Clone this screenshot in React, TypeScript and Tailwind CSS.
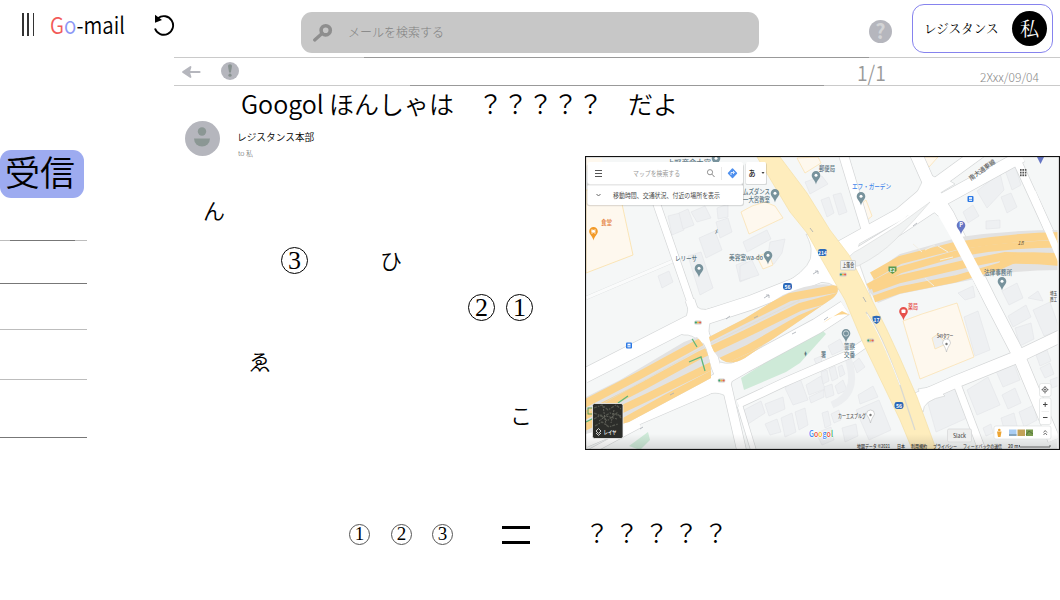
import React from "react";

const JP = "font-['Noto_Sans_CJK_JP',sans-serif]";

type P = { d: string; w: number };

const ROADS: P[] = [
  { d: "M645 170L690 300L697 322", w: 7 },
  { d: "M584 376L688 323L750 303L828 272", w: 14 },
  { d: "M690 300C694 314 704 334 711 348C715 364 716 372 727 387L742 452", w: 9 },
  { d: "M584 440L705 388L745 365L817 326L845 308", w: 15 },
  { d: "M584 455L640 425", w: 5 },
  { d: "M738 404L785 382L850 354L870 340", w: 8 },
  { d: "M845 262L900 228L942 200L1022 156", w: 12 },
  { d: "M835 250L900 214L932 187L980 152", w: 12 },
  { d: "M912 145L932 190L948 215L990 300L1018 354L1054 440", w: 12 },
  { d: "M842 150L868 236", w: 9 },
  { d: "M1012 150L1066 268", w: 8 },
  { d: "M910 402L955 382L1017 357L1065 334", w: 12 },
  { d: "M957 384L982 450", w: 7 },
  { d: "M740 406L754 452", w: 5 },
];

const BUILDINGS: string[] = [
  "668,216 680,213 684,230 672,235", "679,213 688,209 694,225 683,229", "691,212 705,206 711,218 697,222",
  "699,238 715,231 722,250 706,258", "716,222 728,218 732,232 720,238", "688,256 701,252 713,288 700,295",
  "658,276 669,271 673,282 662,288", "736,265 746,261 750,278 740,282", "717,208 728,204 728,217 718,219",
  "743,242 767,230 771,239 747,252", "770,242 785,239 782,253 774,264 767,261", "740,266 752,260 759,275 740,281",
  "805,182 822,176 828,184 810,194", "821,200 829,197 834,213 827,217", "833,195 841,193 847,212 839,215",
  "977,191 1000,173 1004,190 987,208", "1005,170 1015,166 1021,185 1012,190", "1001,197 1011,193 1017,207 1007,213",
  "963,212 973,205 979,216 968,223", "986,221 1000,220 1000,228 986,229", "958,293 973,286 975,297 965,300",
  "1002,291 1017,283 1023,298 1009,305", "1028,298 1038,291 1043,301",
  "828,346 840,339 845,349 832,355", "814,359 821,356 822,363 816,364", "853,363 859,358 865,367 857,373",
  "785,388 800,378 808,400 793,405", "806,385 821,376 825,389 809,395", "821,372 827,370 829,381 823,384",
  "829,369 835,366 838,378 832,381", "838,367 842,365 845,374 840,377", "824,387 832,384 834,395 826,398",
  "835,386 843,380 847,390 838,394", "809,397 824,390 824,397 811,403", "744,410 761,401 765,413 748,424",
  "765,404 783,397 785,409 769,416", "765,424 777,419 781,432 770,435", "781,418 792,413 796,432 785,437",
  "795,412 805,408 808,425 799,430", "822,413 828,411 831,425 825,428", "831,414 839,410 841,420 834,423",
  "842,428 856,424 858,436 845,442", "858,395 873,386 878,397 860,404", "856,410 879,400 891,430 869,440",
  "816,433 831,427 834,440 822,445", "964,317 978,311 990,350 975,356", "1008,316 1026,305 1031,317 1013,327",
  "1015,328 1031,323 1034,339 1020,346", "1033,310 1050,302 1060,330 1044,336", "1036,355 1047,350 1051,361 1040,366",
  "1040,368 1050,363 1054,374 1045,378", "927,400 955,388 967,418 936,432", "967,390 988,377 1000,405 977,415",
  "996,371 1014,364 1020,380 1003,387", "1002,395 1015,388 1021,403 1008,409", "1001,418 1014,413 1018,430 1005,433",
  "1019,412 1034,405 1037,420 1024,427", "983,428 991,424 993,433 986,436", "1050,380 1058,377 1060,385 1052,388",
];

const STRIPS: string[] = [
  "M580 406L640 375L697 344L744 320L790 297L840 288",
  "M580 418L645 385L700 355L745 334L800 307L840 296",
  "M580 429L650 396L705 369L748 349L800 319L840 302",
  "M622 423L665 399L715 373L748 358L800 331L842 312",
];

function Strips() {
  return (
    <g>
      {STRIPS.map((d) => (
        <path key={d} d={d} fill="none" stroke="#fbd38b" strokeWidth="8" />
      ))}
      <path d="M586 413L700 349L800 300" fill="none" stroke="#e2dccb" strokeWidth=".7" />
    </g>
  );
}

function Pin({ x, y, c = "#77929c", s = 1 }: { x: number; y: number; c?: string; s?: number }) {
  return (
    <g transform={`translate(${x} ${y}) scale(${s})`}>
      <path d="M0 7.5C-.8 3-4.3 1.8-4.3-1.8A4.3 4.3 0 0 1 4.3-1.8C4.3 1.8.8 3 0 7.5Z" fill={c} />
      <circle cx="0" cy="-1.8" r="1.5" fill="#fff" />
    </g>
  );
}

type LabelProps = { x: number; y: number; w: number; s?: number; c?: string; b?: number; children: string };

function Label({ x, y, w, s = 6.5, c = "#5b7480", b = 500, children }: LabelProps) {
  return (
    <text x={x} y={y} fontSize={s} fill={c} fontWeight={b} textLength={w} lengthAdjust="spacingAndGlyphs">
      {children}
    </text>
  );
}

function Shield({ x, y, t }: { x: number; y: number; t: string }) {
  return (
    <g>
      <rect x={x - 4.5} y={y - 3.5} width="9" height="7" rx="2.4" fill="#2c68b8" />
      <text x={x} y={y + 2} fontSize="5" fill="#fff" fontWeight="700" textAnchor="middle">{t}</text>
    </g>
  );
}

function Signal({ x, y }: { x: number; y: number }) {
  return (
    <g>
      <rect x={x - 3.8} y={y - 2} width="7.6" height="4" rx="1.6" fill="#cfd0cd" />
      <circle cx={x - 2.1} cy={y} r="1.1" fill="#35a56a" />
      <circle cx={x} cy={y} r="1.1" fill="#f4b545" />
      <circle cx={x + 2.1} cy={y} r="1.1" fill="#e65b50" />
    </g>
  );
}

function MapView() {
  return (
    <svg viewBox="585 156 475 294" className={`block h-[294px] w-[475px] shrink-0 ${JP}`}>
      <defs>
        <clipPath id="hwLeft"><path d="M586 397L620 380L684 342L697 337Q712 352 711 378L700 384L629 422L586 434Z" /></clipPath>
        <clipPath id="hwMid"><path d="M709 337L744 319L783 295Q815 280 837 286Q840 292 833 298L745 358Q731 366 722 360Q712 354 709 337Z" /></clipPath>
        <linearGradient id="fade" x1="0" y1="0" x2="0" y2="1">
          <stop offset="0" stopColor="#000" stopOpacity="0" />
          <stop offset="1" stopColor="#000" stopOpacity=".13" />
        </linearGradient>
      </defs>
      <rect x="585" y="156" width="475" height="294" fill="#f5f7f7" />
      <path d="M586 190L619 190L633 255L586 273Z" fill="#fef8ee" stroke="#fbdc9c" strokeWidth=".7" />
      <path d="M586 158H602V165L586 172Z" fill="#fef8ee" />
      <path d="M586 298L673 261" stroke="#dcdfe0" strokeWidth="4" />
      <path d="M586 298L673 261" stroke="#fafbfb" strokeWidth="3" />
      <g fill="#eef0f2" stroke="#e2e4e7" strokeWidth=".6">
        {BUILDINGS.map((p) => <polygon key={p} points={p} />)}
      </g>
      <g fill="#fef8ee" stroke="#fbdfab" strokeWidth=".7">
        <path d="M741 212L752 206L765 202L775 206L783 218L749 234Z" />
        <path d="M797 158L818 157L821 163L805 173Z" />
        <path d="M861 204L866 200L872 216L866 221Z" />
        <path d="M757 257L768 252L773 265L763 269Z" />
        <path d="M921 157L938 157L929 167Z" />
        <path d="M903 321L922 314L957 303L974 357L920 379Z" />
        <path d="M932 338L938 334L946 344L935 349Z" fill="#eef0f2" />
      </g>
      <path d="M741 378L820 328L826 334L800 363L786 372L744 390Z" fill="#ceead8" />
      <path d="M629 446L648 432L650 440L640 450Z" fill="#ceead8" />
      <path d="M847 355C854 375 856 395 832 405" fill="none" stroke="#eceef0" strokeWidth="7" />

      <g fill="none" stroke="#d3d5d6">
        {ROADS.map((r) => <path key={r.d} d={r.d} strokeWidth={r.w + 1.3} />)}
      </g>
      <g fill="#fff" stroke="#d3d5d6" strokeWidth=".7">
        <path d="M668 331L679 325Q688 320 688 305L692 302Q700 313 712 308L728 312L712 318Q706 328 712 348L700 342Q692 334 684 335Z" />
        <path d="M705 386Q717 375 720 362Q731 366 744 358L765 355Q737 370 733 378Q728 391 733 408Q727 388 705 395Z" />
        <path d="M790 280Q813 265 811 252Q812 246 806 234L818 240L832 238Q836 244 852 240L862 236L856 254L872 300L848 305Q840 282 820 282Z" />
        <path d="M914 398Q922 395 918 389L935 386L945 396Q923 400 923 412Z" />
        <path d="M922 182Q926 178 920 170L928 172Q935 180 942 176L955 184L937 195Q948 198 949 213L938 216Q932 208 922 214L905 216Z" />
      </g>
      <g fill="none" stroke="#fff">
        {ROADS.map((r) => <path key={r.d} d={r.d} strokeWidth={r.w} />)}
      </g>
      <path d="M846 267Q846 255 860 249L900 224L930 202Q915 220 895 240Q880 255 858 266Z" fill="#f1f3f3" stroke="#d6d8d9" strokeWidth=".6" />

      <g clipPath="url(#hwLeft)">
        <rect x="585" y="320" width="135" height="130" fill="#e2e2e2" />
        <Strips />
        <g stroke="#5fb77b" strokeWidth="1.3" fill="none">
          <path d="M691 337L697 347M689 362L701 357L705 371M618 403L628 396M586 422L600 415" />
        </g>
      </g>
      <g clipPath="url(#hwMid)">
        <rect x="705" y="280" width="140" height="90" fill="#e2e2e2" />
        <Strips />
      </g>
      <path d="M823 323L842 311L850 315Q836 312 823 323Z" fill="#fbd38b" />
      <path d="M869 291Q872 272 900 254L960 237Q1010 230 1060 230V270Q1010 270 975 279L900 294L878 303Z" fill="#e2e2e2" />
      <g fill="none" stroke="#fbd38b">
        <path d="M872 276L900 260L955 246Q1010 237 1060 236" strokeWidth="8" />
        <path d="M868 287L900 270L960 253Q1010 244 1060 244" strokeWidth="7" />
        <path d="M872 289L900 279L965 264L1005 256L1060 257" strokeWidth="8" />
        <path d="M1000 257Q1025 251 1060 255V265Q1030 262 1000 263" strokeWidth="2" fill="#fbd38b" />
        <path d="M874 299L900 290L955 279L1000 266L1020 257" strokeWidth="7" />
      </g>
      <path d="M913 244L922 252M938 246L948 252M925 250L935 245M940 260L953 257M925 278L934 286" stroke="#f3efe4" strokeWidth="1" fill="none" />
      <path d="M942 211L954 232L994 308" stroke="#fff" strokeWidth="11" fill="none" />
      <path d="M1032 192L1062 262" stroke="#fff" strokeWidth="7" fill="none" />

      <path d="M757 157H780L807 193L830 230L849 255L872 300L887 330L900 358L917 397L936 449H912L900 420L863 343L845 300L822 260L807 233L790 212Z" fill="#feedbd" stroke="#f5dfa5" strokeWidth=".7" />
      <path d="M866 312Q880 330 900 385L915 430" stroke="#dad9d1" strokeWidth="1.3" fill="none" />
      <path d="M867 314Q881 335 900 385" stroke="#fff" strokeWidth=".8" fill="none" />

      <g stroke="#a6abb2" strokeWidth=".8" fill="none">
        <path d="M764 298L769 295M766 295H769V298M813 274L818 271M815 271H818V274M726 319L730 316M670 395L674 393M640 429L643 427M792 334L796 332M824 320L828 317M913 226L917 223M810 228L813 232M863 297L866 302M754 318L758 316" />
      </g>

      <Label x={667} y={165} w={44}>上野商会大宮</Label>
      <Pin x={716} y={160} />
      <Label x={819} y={171} w={16}>郵便局</Label><Pin x={816} y={177} />
      <Label x={852} y={189} w={39} c="#4285ea">エフ・ガーデン</Label><Pin x={861} y={198} />
      <Label x={743} y={194} w={27}>ムズダンス</Label>
      <Label x={743} y={202} w={27}>一大宮教室</Label><Pin x={775} y={195} />
      <Label x={675} y={261} w={22}>レリーサ</Label><Pin x={699} y={270} />
      <Label x={729} y={260} w={34}>美容室wa-do</Label><Pin x={768} y={257} />
      <Label x={601} y={225} w={11} c="#e47b35">食堂</Label><Pin x={593.5} y={233} c="#f29a28" />
      <path d="M592 229V234M595 229V234M591 231H593" stroke="#fff" strokeWidth=".7" />
      <g transform="translate(961 227)">
        <path d="M0 7.5C-.8 3-4.3 1.8-4.3-1.8A4.3 4.3 0 0 1 4.3-1.8C4.3 1.8.8 3 0 7.5Z" fill="#6676c4" />
        <text x="0" y=".3" fontSize="5.5" fill="#fff" fontWeight="700" textAnchor="middle">P</text>
      </g>
      <path d="M1037 157H1044L1040.500 164Z" fill="#6676c4" />
      <Label x={984} y={275} w={28}>法律事務所</Label><Pin x={1002} y={283} />
      <Label x={908} y={309} w={10} c="#e6504b">薬局</Label><Pin x={903.500} y={313} c="#e6504b" />
      <rect x="901.500" y="309.500" width="4" height="3.600" rx=".8" fill="#fff" />
      <Label x={937} y={338} w={16} s={5.5} c="#555">S49タワー</Label>
      <g transform="translate(946.500 344)"><path d="M0 8C-1 3-4-0-4-1A4 4 0 0 1 4-1C4 0 1 3 0 8Z" fill="#fff" stroke="#b5b7b9" strokeWidth=".6" /><circle r="1.200" fill="#777" /></g>
      <Pin x={846} y={335} s={1} /><circle cx="846" cy="333.500" r="2.600" fill="#77929c" stroke="#dce4e7" strokeWidth=".8" />
      <Label x={844} y={349} w={11}>警察</Label><Label x={844} y={357} w={11}>交番</Label>
      <Label x={821} y={357} w={5}>署</Label>
      <Label x={804} y={356} w={3} s={6}>♦</Label>
      <Label x={715} y={233} w={3} s={6}>ﾒ</Label>
      <Label x={838} y={418} w={28} s={5.5} c="#555">カーエスブルグ</Label>
      <g transform="translate(870.500 415)"><path d="M0 8C-1 3-4 0-4-1A4 4 0 0 1 4-1C4 0 1 3 0 8Z" fill="#fff" stroke="#b5b7b9" strokeWidth=".6" /><circle r="1.200" fill="#777" /></g>
      <Label x={1050} y={295} w={7} s={5} c="#555">埼玉</Label><Label x={1050} y={301} w={7} s={5} c="#555">商工</Label>
      <g transform="rotate(-36 971 181)"><Label x={971} y={181} w={31} s={6.500} c="#666">南大通東線</Label></g>
      <text x="1017.500" y="245" fontSize="5.500" fill="#655536" fontStyle="italic">18</text>

      <Shield x={822.5} y={252.500} t="214" />
      <Shield x={787.500} y={286.500} t="56" />
      <Shield x={899} y={405.500} t="56" />
      <path d="M872.500 316.500Q876.500 315 880.500 316.500Q881 322 876.500 324Q872 322 872.500 316.500Z" fill="#2c68b8" />
      <text x="876.500" y="321.500" fontSize="5" fill="#fff" fontWeight="700" textAnchor="middle">17</text>
      <path d="M888.500 266.500H896.500V271L892.500 274L888.500 271Z" fill="#5a9a52" />
      <text x="892.500" y="271.500" fontSize="4.500" fill="#fff" fontWeight="700" textAnchor="middle">E2</text>
      <rect x="588" y="408" width="6" height="6" fill="none" stroke="#5a9a52" />
      {[[629, 345.500], [970.500, 199]].map(([x, y]) => (
        <g key={x}><rect x={x - 3} y={y - 3} width="6" height="6" rx="1" fill="#2b78e4" /><rect x={x - 1.500} y={y - 1.800} width="3" height="3.600" fill="#fff" /><path d={`M${x - 1.500} ${y + .3}h3`} stroke="#2b78e4" strokeWidth=".8" /></g>
      ))}
      <Signal x={698} y={322.500} /><Signal x={721.500} y={380.500} /><Signal x={843} y={274.500} /><Signal x={870.500} y={340.500} />
      <rect x="840.500" y="260.500" width="15" height="9.500" rx="1" fill="#f2f3f4" stroke="#c5c8ca" strokeWidth=".7" />
      <Label x={842.5} y={267.2} w={11.5} s={5.3} c="#444">上落合</Label>

      <g>
        <rect x="586.500" y="164" width="157.500" height="42.200" rx="3" fill="#000" opacity=".12" />
        <rect x="587.500" y="184" width="155.500" height="21" rx="2.500" fill="#fff" />
        <rect x="587.500" y="184" width="155.500" height="1.600" fill="#000" opacity=".09" />
        <rect x="587.500" y="162" width="155.500" height="22" rx="2.500" fill="#fff" />
        <path d="M595 170.500H602M595 173.500H602M595 176.500H602" stroke="#555" strokeWidth="1" />
        <Label x={633} y={175.500} w={47} s={6.500} c="#999" b={400}>マップを検索する</Label>
        <circle cx="710" cy="172.200" r="2.600" fill="none" stroke="#888" strokeWidth=".9" />
        <path d="M712 174.200L714.500 177" stroke="#888" strokeWidth="1" />
        <path d="M721.500 167V180" stroke="#e4e4e4" strokeWidth=".8" />
        <path d="M732.500 169L736.500 173.200L732.500 177.500L728.500 173.200Z" fill="#4f90ee" stroke="#4f90ee" strokeWidth="1.400" strokeLinejoin="round" />
        <path d="M731 175V172.500H734M733 171L734.500 172.500L733 174" stroke="#fff" strokeWidth=".8" fill="none" />
        <path d="M596.500 194L598.500 196L600.500 194" stroke="#666" strokeWidth="1" fill="none" />
        <Label x={613} y={198} w={107} s={6.500} c="#4a4a4a" b={400}>移動時間、交通状況、付近の場所を表示</Label>
        <rect x="745.500" y="163" width="21.500" height="22" rx="1.500" fill="#000" opacity=".12" />
        <rect x="746" y="162" width="20" height="22" rx="1.500" fill="#fff" />
        <Label x={748.5} y={176.3} w={7} s={7.5} c="#222">あ</Label>
        <path d="M761.500 172H764.500L763 174Z" fill="#444" />
      </g>
      <g fill="#555">
        {[0, 1, 2].map((i) => [0, 1, 2].map((j) => <rect key={`${i}${j}`} x={1020 + i * 2.400} y={169 + j * 2.700} width="1.600" height="1.800" />))}
      </g>

      <rect x="585" y="434" width="475" height="16" fill="url(#fade)" />
      <rect x="592.500" y="403.500" width="30.500" height="35" rx="2" fill="#2c2d2a" stroke="#f4f4f4" strokeWidth=".8" />
      <g fill="none" stroke="#55574f" strokeWidth="1.300" strokeDasharray="3 1.200 1.500 1">
        <path d="M594 408L602 405L608 410L616 405L621 409M594 413L603 417L610 413L621 416M594 419L601 415L607 421L617 413L621 418M595 426L602 422L609 427L618 424" />
      </g>
      <path d="M599 421L606 416L617 419M603 406L606 425M614 410L611 423" stroke="#6f6f66" strokeWidth=".8" strokeDasharray="2 1" fill="none" />
      <path d="M596 431L598.500 428.500L601 431L598.500 433.500ZM596 433L598.500 435.500L601 433" fill="none" stroke="#ddd" strokeWidth=".9" />
      <Label x={603.500} y={434} w={13} s={6} c="#fff">レイヤ</Label>

      <text x="809" y="437" fontSize="9" fontWeight="500" textLength="24" lengthAdjust="spacingAndGlyphs" stroke="#fff" strokeWidth="1" paintOrder="stroke">
        <tspan fill="#4285f4">G</tspan><tspan fill="#ea4335">o</tspan><tspan fill="#fbbc05">o</tspan><tspan fill="#4285f4">g</tspan><tspan fill="#ea4335">o</tspan><tspan fill="#34a853">l</tspan>
      </text>
      <rect x="947.500" y="429" width="24" height="13" rx="1.500" fill="#eeefef" stroke="#d5d6d7" strokeWidth=".7" />
      <Label x={953} y={437.500} w={13} s={6} c="#555">Slack</Label>
      <Label x={857} y={447.500} w={33} s={5} c="#333">地図データ ©2021</Label>
      <Label x={897} y={447.500} w={8} s={5} c="#333">日本</Label>
      <Label x={911} y={447.500} w={16} s={5} c="#333">利用規約</Label>
      <Label x={933} y={447.500} w={24} s={5} c="#333">プライバシー</Label>
      <Label x={963} y={447.500} w={39} s={5} c="#333">フィードバックの送信</Label>
      <text x="1008" y="447.500" fontSize="4.500" fill="#333" fontWeight="500">20 m</text>
      <path d="M1019.500 445V447H1050V445" stroke="#555" strokeWidth=".9" fill="none" />

      <g fill="#fff" stroke="#d9dbdc" strokeWidth=".6">
        <rect x="1039.500" y="383.500" width="11.500" height="13" rx="2" />
        <rect x="1039.500" y="398" width="11.500" height="26.500" rx="2" />
        <rect x="994" y="426" width="57" height="13" rx="2" />
      </g>
      <circle cx="1045" cy="389.700" r="2.200" fill="none" stroke="#555" strokeWidth=".8" />
      <circle cx="1045" cy="389.700" r=".9" fill="#555" />
      <path d="M1045 386V387.500M1045 392V393.500M1041.500 389.700H1043M1047 389.700H1048.500" stroke="#555" strokeWidth=".8" />
      <path d="M1043 404.500H1047.500M1045.200 402.200V406.800M1043 417.500H1047.500" stroke="#444" strokeWidth="1" />
      <path d="M1041.500 411.500H1049" stroke="#e4e4e4" strokeWidth=".6" />
      <path d="M1043.500 432.500L1045.200 430.500L1047 432.500M1043.500 435L1045.200 433L1047 435" stroke="#555" strokeWidth=".8" fill="none" />
      <circle cx="999.300" cy="430" r="1.300" fill="#eda533" />
      <path d="M997 431.500H1001.500L1000.500 437H998Z" fill="#eda533" />
      <rect x="1009" y="429.500" width="7.500" height="6.500" fill="#a9cdf3" /><rect x="1009" y="434" width="7.500" height="2" fill="#86a5bd" />
      <rect x="1017.500" y="429.500" width="7.500" height="6.500" fill="#c3a258" />
      <rect x="1026" y="429.500" width="7" height="6.500" fill="#7a9b4f" /><path d="M1026 435L1029 431L1033 434" stroke="#53753a" fill="none" />

      <path d="M1058.500 157V449" stroke="#f3f3f3" strokeWidth="2" />
      <rect x="585.500" y="156.500" width="474" height="293" fill="none" stroke="#111" strokeWidth="1.200" />
    </svg>
  );
}

function Rule({ side }: { side: "top" | "bottom" }) {
  return (
    <div className="flex h-px w-full bg-[#cacaca]">
      <div className={side === "top" ? "ml-[190px] h-px w-[505px] bg-[#999]" : "ml-[236px] h-px w-[414px] bg-[#999]"} />
    </div>
  );
}

const MARKS = [
  { t: "ん", c: "left-[203px] top-[196px] text-[22px]" },
  { t: "ひ", c: "left-[380px] top-[246px] text-[22px]" },
  { t: "ゑ", c: "left-[249px] top-[347px] text-[22px]" },
  { t: "こ", c: "left-[510px] top-[401px] text-[22px]" },
];

const SPOTS = [
  { n: "3", c: "left-[281px] top-[247px]" },
  { n: "2", c: "left-[468px] top-[294px]" },
  { n: "1", c: "left-[506px] top-[294px]" },
];

export default function App() {
  return (
    <div className={`relative flex h-[600px] w-[1060px] flex-col overflow-hidden bg-white text-black ${JP}`}>
      <header className="flex h-[57px] shrink-0 items-start">
        <div className="ml-[22px] mt-[13px] flex h-[23px] w-3 justify-between">
          <span className="w-[1.5px] bg-[#333]" />
          <span className="w-[1.5px] bg-[#333]" />
          <span className="w-[1.5px] bg-[#333]" />
        </div>
        <h1 className="ml-4 mt-[8px] w-[103px] origin-left scale-x-[0.89] whitespace-nowrap text-[23px] font-[350] leading-8">
          <span className="text-[#f25a58]">G</span>
          <span className="text-[#8c97f5]">o</span>-mail
        </h1>
        <svg viewBox="0 0 22 22" className="mt-[14px] h-[22px] w-[22px]">
          <path d="M2 14.500A9.300 9.300 0 1 0 5 4.200" fill="none" stroke="#000" strokeWidth="1.900" />
          <path d="M2 .8V8.800L9 6Z" />
        </svg>
        <div className="ml-[126px] mt-3 flex h-[41px] w-[458px] items-center rounded-[11px] bg-[#c7c7c7]">
          <svg viewBox="0 0 20 20" className="ml-3 h-5 w-5" fill="none" stroke="#8e8e8e">
            <circle cx="12.700" cy="7.300" r="4.600" strokeWidth="3.600" />
            <path d="M9 10.500L1.700 17" strokeWidth="3.200" strokeLinecap="round" />
          </svg>
          <span className="ml-[15px] -mt-0.5 text-[12px] font-light text-[#808080]">メールを検索する</span>
        </div>
        <div className="ml-[110px] mt-5 flex h-[23px] w-[23px] items-center justify-center rounded-full bg-[#b5b6bd] text-[20px] font-bold leading-none text-[#d3d4d6]"><span className="-mt-0.5">?</span></div>
        <div className="ml-5 mt-[4px] flex h-[49px] w-[141px] items-center rounded-[12px] border border-[#8683ee]">
          <span className="ml-[11px] w-[88px] whitespace-nowrap font-['Noto_Serif_CJK_JP','Noto_Sans_CJK_JP',serif] text-[12.6px] font-normal">レジスタンス</span>
          <span className="flex h-[35px] w-[35px] items-center justify-center rounded-full bg-black font-['Noto_Serif_CJK_JP','Noto_Sans_CJK_JP',serif] text-[19px] font-normal leading-none text-white"><span className="-mt-0.5">私</span></span>
        </div>
      </header>

      <div className="flex grow">
        <aside className="flex w-[174px] flex-col pt-[93px]">
          <div className="flex h-[48px] w-[84px] items-center rounded-[11px] bg-[#9dabf0] pl-[5px] text-[35px] font-[350] leading-none">
            <span className="-mt-2">受信</span>
          </div>
          <div className="mt-[42px] flex h-px w-[87px] bg-[#bdbdbd]"><div className="ml-[10px] w-[65px] bg-[#777]" /></div>
          <div className="mt-[42px] h-px w-[87px] bg-[#777]" />
          <div className="mt-[45px] h-px w-[87px] bg-[#bdbdbd]" />
          <div className="mt-[49px] h-px w-[87px] bg-[#bdbdbd]" />
          <div className="mt-[57px] h-px w-[87px] bg-[#777]" />
        </aside>

        <main className="flex w-[886px] flex-col">
          <Rule side="top" />
          <div className="flex h-[27px] items-start">
            <svg viewBox="0 0 20 14" className="ml-[7px] mt-[7px] h-[14px] w-5" fill="none" stroke="#b5b6bd">
              <path d="M3 7H18.500" strokeWidth="2.200" strokeLinecap="round" />
              <path d="M2 7L9.500 2L8 7L9.500 12Z" fill="#b5b6bd" strokeWidth="1.800" strokeLinejoin="round" />
            </svg>
            <svg viewBox="0 0 18 18" className="ml-5 mt-1 h-[18px] w-[18px]">
              <circle cx="9" cy="9" r="9" fill="#b5b6bd" />
              <path d="M7 4A2 1.800 0 0 1 11 4L9.900 10.500H8.100Z" fill="#87918f" />
              <circle cx="9" cy="13.200" r="1.600" fill="#87918f" />
            </svg>
            <span className="-mt-px ml-[618px] w-[30px] origin-left scale-x-[0.92] whitespace-nowrap text-[21px] font-[350] leading-[30px] text-[#999]">1/1</span>
            <span className="ml-[93px] mt-[10px] whitespace-nowrap text-[12px] font-light leading-[18px] text-[#888]">2Xxx/09/04</span>
          </div>
          <Rule side="bottom" />
          <h2 className="ml-[67px] flex h-[36px] whitespace-nowrap text-[25px] font-[350] leading-[34px]">
            <span className="w-[88px]">Googol</span>
            <span className="w-[149px]">ほんしゃは</span>
            <span className="w-[150px]">？？？？？</span>
            <span>だよ</span>
          </h2>
          <div className="flex justify-between">
            <div className="ml-[11px] flex h-10">
              <svg viewBox="0 0 35 35" className="-mt-px h-[35px] w-[35px]">
                <circle cx="17.500" cy="17.500" r="17.500" fill="#b5b6bd" />
                <circle cx="17" cy="10.500" r="4.200" fill="#8b9794" />
                <path d="M9 17.500H25A8 8 0 0 1 9 17.500Z" fill="#8b9794" />
              </svg>
              <div className="ml-[17px] mt-2 flex flex-col whitespace-nowrap">
                <span className="text-[9.7px] font-[350] leading-[14px]">レジスタンス本部</span>
                <span className="ml-px mt-1 text-[7px] font-light leading-[10px] text-[#555]">to 私</span>
              </div>
            </div>
            <div className="mt-[34px]"><MapView /></div>
          </div>
          <div className="ml-[175px] mt-[74px] flex h-[21px] items-center font-['Liberation_Serif',serif] text-[19px]">
            <span className="flex h-[21px] w-[21px] items-center justify-center rounded-full border border-[#555]">1</span>
            <span className="ml-[21px] flex h-[21px] w-[21px] items-center justify-center rounded-full border border-[#555]">2</span>
            <span className="ml-5 flex h-[21px] w-[21px] items-center justify-center rounded-full border border-[#555]">3</span>
            <span className="ml-[49px] h-[18px] w-7 border-y-[3px] border-black" />
            <span className={`-mt-1.5 ml-[55px] whitespace-nowrap text-[24px] font-[350] tracking-[5.7px] ${JP}`}>？？？？？</span>
          </div>
        </main>
      </div>

      {MARKS.map((m) => (
        <span key={m.t} className={`absolute font-[350] leading-[26px] ${m.c}`}>{m.t}</span>
      ))}
      {SPOTS.map((s) => (
        <span key={s.n} className={`absolute flex h-[27px] w-[27px] items-center justify-center rounded-full border border-black font-['Liberation_Serif',serif] text-[26px] leading-none ${s.c}`}>{s.n}</span>
      ))}
    </div>
  );
}
